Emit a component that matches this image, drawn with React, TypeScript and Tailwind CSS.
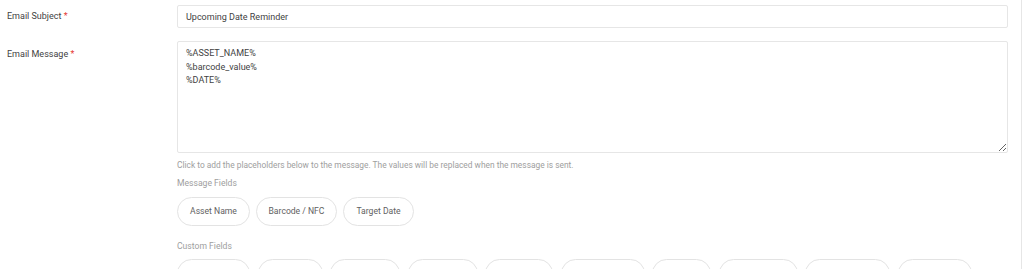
import { useState } from "react";

const messageFields = [
  { label: "Asset Name", token: "%ASSET_NAME%", w: "w-[73px]" },
  { label: "Barcode / NFC", token: "%barcode_value%", w: "w-[81px]" },
  { label: "Target Date", token: "%DATE%", w: "w-[71px]" },
];

// custom field chips - only their top edge is in view
const customFields = [
  { id: "cf1", w: "w-[73px]" },
  { id: "cf2", w: "w-[65px]" },
  { id: "cf3", w: "w-[70px]" },
  { id: "cf4", w: "w-[70px]" },
  { id: "cf5", w: "w-[68px]" },
  { id: "cf6", w: "w-[84px]" },
  { id: "cf7", w: "w-[59px]" },
  { id: "cf8", w: "w-[79px]" },
  { id: "cf9", w: "w-[85px]" },
  { id: "cf10", w: "w-[74px]" },
];

function Label({ children }: { children: React.ReactNode }) {
  return (
    <div className="w-[177px] shrink-0 pl-[7px] text-[9px] text-[#424242]">
      {children} <span className="text-[#e53935]">*</span>
    </div>
  );
}

function Chip({ label, w, onClick }: { label?: string; w: string; onClick?: () => void }) {
  return (
    <button
      onClick={onClick}
      className={`${w} h-[29px] shrink-0 rounded-full border border-[#e3e3e3] bg-white text-[8.6px] text-[#616161] whitespace-nowrap`}
    >
      {label}
    </button>
  );
}

export default function App() {
  const [subject, setSubject] = useState("Upcoming Date Reminder");
  const [message, setMessage] = useState("%ASSET_NAME%\n%barcode_value%\n%DATE%");

  return (
    <div className="w-[1022px] min-h-[269px] bg-white border-r border-[#e6e6e6] font-['Roboto',sans-serif]">
      {/* Email Subject */}
      <div className="flex items-center pt-[5px]">
        <Label>Email Subject</Label>
        <input
          value={subject}
          onChange={(e) => setSubject(e.target.value)}
          className="w-[831px] h-[23px] rounded-[2px] border border-[#e6e6e6] px-[8px] text-[9px] text-[#424242] outline-none"
        />
      </div>

      {/* Email Message */}
      <div className="flex mt-[13px]">
        <div className="pt-[7px]">
          <Label>Email Message</Label>
        </div>
        <div className="w-[831px]">
          <textarea
            value={message}
            onChange={(e) => setMessage(e.target.value)}
            className="block w-full h-[112px] rounded-[2px] border border-[#e6e6e6] px-[8px] pt-[5px] text-[9px] leading-[13.5px] text-[#424242] outline-none resize"
          />
          <p className="mt-[6px] text-[8.4px] leading-[12px] text-[#9e9e9e]">
            Click to add the placeholders below to the message. The values will be replaced when the message is sent.
          </p>
          <p className="mt-[6px] text-[8.6px] leading-[12px] text-[#9e9e9e]">Message Fields</p>
          <div className="flex gap-[6px] mt-[8px]">
            {messageFields.map((f) => (
              <Chip key={f.label} label={f.label} w={f.w} onClick={() => setMessage((m) => m + "\n" + f.token)} />
            ))}
          </div>
          <p className="mt-[14px] text-[8.6px] leading-[12px] text-[#9e9e9e]">Custom Fields</p>
          <div className="flex gap-[7.5px] mt-[7px]">
            {customFields.map((f) => (
              <Chip key={f.id} w={f.w} />
            ))}
          </div>
        </div>
      </div>
    </div>
  );
}
